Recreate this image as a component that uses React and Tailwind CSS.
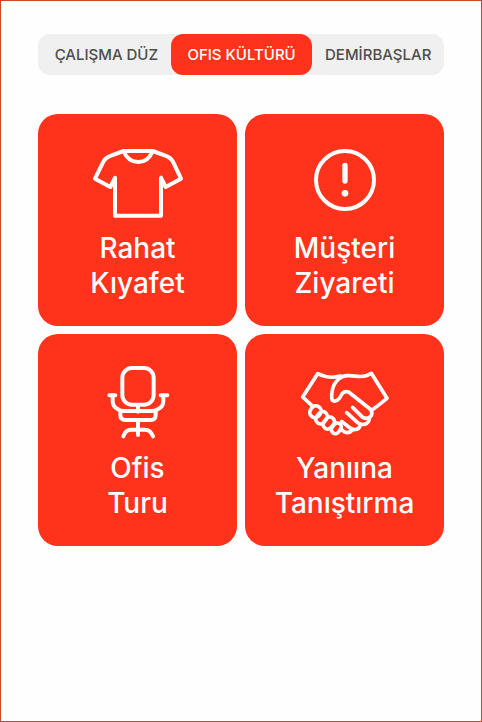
import { useState } from "react";

const TABS = ["ÇALIŞMA DÜZ", "OFIS KÜLTÜRÜ", "DEMİRBAŞLAR"];

function Icon({ viewBox, children }) {
  return (
    <svg
      viewBox={viewBox}
      className="h-19 w-24 shrink-0"
      fill="none"
      stroke="currentColor"
      strokeWidth="12"
      strokeLinecap="round"
      strokeLinejoin="round"
      aria-hidden="true"
    >
      {children}
    </svg>
  );
}

function ShirtIcon() {
  return (
    <Icon viewBox="30 33 288 228">
      <path d="M131 48 H218 L256 62 Q272 67 280 82 L303 131 L257 156 L243 128 V242 H105 V128 L91 156 L45 131 L69 82 Q77 67 93 62 Z" />
      <path d="M132 50 Q144 80 175 81 Q205 80 217 50" />
    </Icon>
  );
}

function AlertIcon() {
  return (
    <Icon viewBox="51 33 288 228">
      <circle cx="195" cy="135" r="87" />
      <path d="M195 91 V138" strokeWidth="16" />
      <circle cx="195" cy="175" r="10" fill="currentColor" stroke="none" />
    </Icon>
  );
}

function ChairIcon() {
  return (
    <Icon viewBox="0 33 288 228">
      <rect x="97" y="39" width="94" height="110" rx="29" />
      <path d="M144 150 V170" />
      <path d="M58 121 H76 M68 122 V137 Q68 154 82 161 Q90 168 104 168 H185 Q199 168 206 161 Q220 154 220 137 V122 M212 121 H232" />
      <path d="M91 172 V180 Q91 195 106 195 H182 Q197 195 197 180 V172" />
      <path d="M144 197 V240 M100 244 Q106 224 124 224 H164 Q182 224 189 244" />
    </Icon>
  );
}

function HandshakeIcon() {
  return (
    <Icon viewBox="21 18 288 228">
      <g strokeWidth="11">
        <path d="M66 137 L38 111 L83 41 Q118 58 151 48" />
        <path d="M246 150 L257 142 L291 115 L244 40 Q226 52 205 49 L176 47 Q158 46 146 57 Q130 72 127 91 Q123 112 127 121 Q137 128 148 115 L157 100 Q164 93 176 96 L240 147 Q251 160 241 170 Q232 179 218 172 L188 142" />
        <path d="M238 174 Q238 190 222 193 Q211 195 203 188 L170 158" />
        <path d="M211 193 Q209 209 193 209 Q184 208 176 201 L155 184" />
        <path d="M187 210 Q178 221 164 216 L151 207" />
        <rect x="61" y="137" width="31" height="36" rx="15" transform="rotate(35 76 155)" />
        <rect x="81" y="154" width="28" height="39" rx="14" transform="rotate(38 95 173)" />
        <rect x="103" y="170" width="27" height="38" rx="13" transform="rotate(40 116 189)" />
        <rect x="127" y="188" width="24" height="34" rx="12" transform="rotate(38 139 205)" />
      </g>
    </Icon>
  );
}

const CARDS = [
  { lines: ["Rahat", "Kıyafet"], Glyph: ShirtIcon },
  { lines: ["Müşteri", "Ziyareti"], Glyph: AlertIcon },
  { lines: ["Ofis", "Turu"], Glyph: ChairIcon },
  { lines: ["Yanıına", "Tanıştırma"], Glyph: HandshakeIcon },
];

export default function App() {
  const [active, setActive] = useState(1);

  return (
    <main className="min-h-screen border border-[#cf4429] bg-[#fefefe] px-[37px] pt-[33px] pb-8 font-['Inter','Liberation_Sans',sans-serif]">
      <nav className="flex h-[41px] rounded-xl bg-[#f0f0f0] pl-1" aria-label="Bölümler">
        {TABS.map((tab, i) => (
          <button
            key={tab}
            type="button"
            aria-pressed={active === i}
            onClick={() => setActive(i)}
            className={
              active === i
                ? "grow rounded-xl bg-[#ff321b] px-4 pt-0.5 text-[15px] font-medium whitespace-nowrap text-white"
                : "grow rounded-xl px-3 pt-0.5 text-[15px] font-medium whitespace-nowrap text-[#4d4d4d]"
            }
          >
            {tab}
          </button>
        ))}
      </nav>

      <section className="mt-[39px] grid grid-cols-2 gap-2">
        {CARDS.map(({ lines, Glyph }) => (
          <button
            key={lines[0]}
            type="button"
            className="flex h-[212px] flex-col items-center rounded-[20px] bg-[#ff321b] pt-8 text-white"
          >
            <Glyph />
            <span className="mt-[9px] text-[28px] leading-[35px] font-medium">
              {lines[0]}
              <br />
              {lines[1]}
            </span>
          </button>
        ))}
      </section>
    </main>
  );
}
